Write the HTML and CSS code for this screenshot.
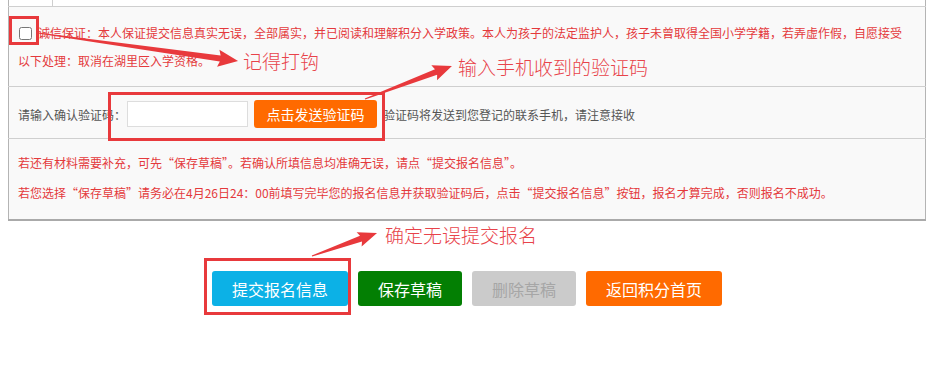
FILE: index.html
```html
<!DOCTYPE html>
<html lang="zh-CN">
<head>
    <meta charset="UTF-8">
    <title>积分入学报名</title>
    <link rel="stylesheet" href="styles.css">
</head>
<body>
<div class="page">
    <table class="form-table">
        <tr class="top-row"><td class="first"></td><td></td></tr>
        <tr>
            <td colspan="2" class="promise">
                <input type="checkbox" class="agree">诚信保证：本人保证提交信息真实无误，全部属实，并已阅读和理解积分入学政策。本人为孩子的法定监护人，孩子未曾取得全国小学学籍，若弄虚作假，自愿接受<br>以下处理：取消在湖里区入学资格。
            </td>
        </tr>
        <tr>
            <td colspan="2" class="code-cell">
                <div class="code-line">
                    <span class="label">请输入确认验证码：</span>
                    <input type="text" class="code-input">
                    <button class="send-btn">点击发送验证码</button>
                    <span class="hint">验证码将发送到您登记的联系手机，请注意接收</span>
                </div>
            </td>
        </tr>
        <tr class="last">
            <td colspan="2" class="notice">
                <span class="wide-quotes">若还有材料需要补充，可先“保存草稿”。若确认所填信息均准确无误，请点“提交报名信息”。</span><br>
                若您选择“保存草稿”请务必在4月26日24：00前填写完毕您的报名信息并获取验证码后，点击“提交报名信息”按钮，报名才算完成，否则报名不成功。
            </td>
        </tr>
    </table>

    <div class="actions">
        <button class="btn btn-submit">提交报名信息</button>
        <button class="btn btn-save">保存草稿</button>
        <button class="btn btn-delete" disabled>删除草稿</button>
        <button class="btn btn-back">返回积分首页</button>
    </div>

    <!-- screenshot notes drawn on top -->
    <div class="mark mark-check"></div>
    <div class="mark mark-code"></div>
    <div class="mark mark-submit"></div>
    <svg class="arrows" width="944" height="377" viewBox="0 0 944 377">
        <g fill="#e8393c">
            <polygon transform="translate(38,33) rotate(7.97)" points="0,-0.6 184,-3 182,-8.5 202,0 182,8.5 184,3 0,0.6"/>
            <polygon transform="translate(365,99) rotate(-20.8)" points="0,-0.6 76,-3 74,-8 93,0 74,8 76,3 0,0.6"/>
            <polygon transform="translate(312,256) rotate(-19.5)" points="0,-0.6 52,-3 50,-7.5 69,0 50,7.5 52,3 0,0.6"/>
        </g>
    </svg>
    <span class="note note-check">记得打钩</span>
    <span class="note note-code">输入手机收到的验证码</span>
    <span class="note note-submit">确定无误提交报名</span>
</div>
</body>
</html>
```

FILE: styles.css
```css
body { margin: 0; background: #fff; font-family: "Noto Sans CJK SC", sans-serif; font-size: 12px; }
.page { position: relative; width: 944px; height: 377px; overflow: hidden; }
.form-table { margin: 0 0 0 8px; width: 918px; border-collapse: collapse; border-left: 1px solid #b4b4b4; border-right: 1px solid #b4b4b4; }
.form-table td { background: #f9f9f9; border-bottom: 1px solid #cfcfcf; padding: 0 9px; }
.top-row td { height: 6px; padding: 0; background: #fff; }
.top-row td.first { width: 43px; border-right: 1px solid #cfcfcf; }
.promise { color: #e4393c; line-height: 28px; padding: 12px 9px 11px !important; }
.agree { width: 13px; height: 13px; margin: 0 6px 0 1px; vertical-align: -2px; }
.code-cell { padding: 13px 9px 10px !important; }
.code-line { display: flex; align-items: center; height: 28px; }
.label { color: #555; }
.code-input { width: 121px; height: 26px; box-sizing: border-box; border: 1px solid #ddd; background: #fff; margin: 0 6px 0 1px; padding: 0 4px; }
.send-btn { width: 123px; height: 28px; border: none; border-radius: 3px; background: #ff6a00; color: #fff; font-family: inherit; font-size: 14px; padding: 0; margin-right: 6px; }
.hint { color: #555; }
.notice { color: #e4393c; line-height: 30px; padding: 9px 9px 11px !important; }
.wide-quotes { font-feature-settings: "fwid"; }
.last td { border-bottom: 2px solid #aaa; }
.actions { display: flex; justify-content: center; gap: 10px; width: 918px; margin: 50px 0 0 8px; }
.btn { height: 35px; border: none; border-radius: 3px; color: #fff; font-family: inherit; font-size: 16px; padding: 0; cursor: pointer; }
.btn-submit { width: 136px; background: #0cb1e6; }
.btn-save { width: 104px; background: #037f03; }
.btn-delete { width: 104px; background: #cbcbcb; color: #a6a6a6; cursor: default; }
.btn-back { width: 136px; background: #ff6a00; }
.mark { position: absolute; box-sizing: border-box; border: 3px solid #e8393c; }
.mark-check { left: 9px; top: 16px; width: 30px; height: 29px; }
.mark-code { left: 108px; top: 92px; width: 277px; height: 49px; }
.mark-submit { left: 204px; top: 258px; width: 147px; height: 57px; }
.arrows { position: absolute; left: 0; top: 0; }
.note { position: absolute; color: #e8434a; font-size: 19px; font-weight: 300; line-height: 20px; white-space: nowrap; }
.note-check { left: 243px; top: 51px; }
.note-code { left: 458px; top: 57px; }
.note-submit { left: 385px; top: 225px; }
```
